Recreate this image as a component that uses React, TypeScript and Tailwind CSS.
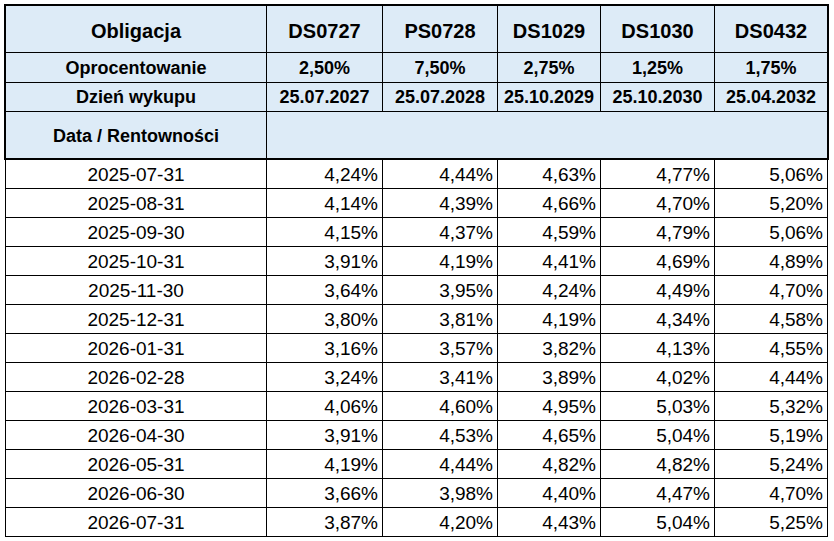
const bonds = [
  { name: "DS0727", rate: "2,50%", date: "25.07.2027" },
  { name: "PS0728", rate: "7,50%", date: "25.07.2028" },
  { name: "DS1029", rate: "2,75%", date: "25.10.2029" },
  { name: "DS1030", rate: "1,25%", date: "25.10.2030" },
  { name: "DS0432", rate: "1,75%", date: "25.04.2032" },
];

const rows: [string, string[]][] = [
  ["2025-07-31", ["4,24%", "4,44%", "4,63%", "4,77%", "5,06%"]],
  ["2025-08-31", ["4,14%", "4,39%", "4,66%", "4,70%", "5,20%"]],
  ["2025-09-30", ["4,15%", "4,37%", "4,59%", "4,79%", "5,06%"]],
  ["2025-10-31", ["3,91%", "4,19%", "4,41%", "4,69%", "4,89%"]],
  ["2025-11-30", ["3,64%", "3,95%", "4,24%", "4,49%", "4,70%"]],
  ["2025-12-31", ["3,80%", "3,81%", "4,19%", "4,34%", "4,58%"]],
  ["2026-01-31", ["3,16%", "3,57%", "3,82%", "4,13%", "4,55%"]],
  ["2026-02-28", ["3,24%", "3,41%", "3,89%", "4,02%", "4,44%"]],
  ["2026-03-31", ["4,06%", "4,60%", "4,95%", "5,03%", "5,32%"]],
  ["2026-04-30", ["3,91%", "4,53%", "4,65%", "5,04%", "5,19%"]],
  ["2026-05-31", ["4,19%", "4,44%", "4,82%", "4,82%", "5,24%"]],
  ["2026-06-30", ["3,66%", "3,98%", "4,40%", "4,47%", "4,70%"]],
  ["2026-07-31", ["3,87%", "4,20%", "4,43%", "5,04%", "5,25%"]],
];

const cols = "grid-cols-[260px_115px_114px_102px_113px_112px]";

export default function App() {
  return (
    <div
      className="min-h-[541px] w-[834px] bg-white pt-[4px] text-black"
      style={{ fontFamily: '"Liberation Sans", Arial, sans-serif' }}
    >
      {/* nagłówek z grubą ramką */}
      <div className="ml-[4px] w-[825px] border-2 border-black bg-black">
        <div className={`grid ${cols} grid-rows-[46px_29px_28px_46px] gap-px`}>
          <div className="flex items-center justify-center bg-[#ddebf7] pt-[3px] text-[20px] font-bold">
            Obligacja
          </div>
          {bonds.map((b) => (
            <div
              key={b.name}
              className="flex items-center justify-center bg-[#ddebf7] pt-[3px] text-[20px] font-bold"
            >
              {b.name}
            </div>
          ))}

          <div className="flex items-center justify-center bg-[#ddebf7] pt-[2px] text-[18px] font-bold">
            Oprocentowanie
          </div>
          {bonds.map((b) => (
            <div
              key={b.name}
              className="flex items-center justify-center bg-[#ddebf7] pt-[2px] text-[18px] font-bold"
            >
              {b.rate}
            </div>
          ))}

          <div className="flex items-center justify-center bg-[#ddebf7] text-[18px] font-bold">
            Dzień wykupu
          </div>
          {bonds.map((b) => (
            <div
              key={b.name}
              className="flex items-center justify-center bg-[#ddebf7] text-[18px] font-bold"
            >
              {b.date}
            </div>
          ))}

          <div className="flex items-center justify-center bg-[#ddebf7] pt-[3px] text-[18px] font-bold">
            Data / Rentowności
          </div>
          <div className="col-span-5 bg-[#ddebf7]" />
        </div>
      </div>

      {/* dane */}
      <div className="ml-[5px] w-[823px] bg-black px-px pb-px">
        <div className={`grid ${cols} auto-rows-[28px] gap-px`}>
          {rows.map(([date, vals], i) => (
            <div key={date} className="contents">
              <div
                className={`flex items-center justify-center bg-white pt-[2px] text-[19px] ${
                  i === 0 ? "" : ""
                }`}
              >
                {date}
              </div>
              {vals.map((v, j) => (
                <div
                  key={j}
                  className="flex items-center justify-end bg-white pr-[4px] pt-[2px] text-[19px]"
                >
                  {v}
                </div>
              ))}
            </div>
          ))}
        </div>
      </div>
    </div>
  );
}
